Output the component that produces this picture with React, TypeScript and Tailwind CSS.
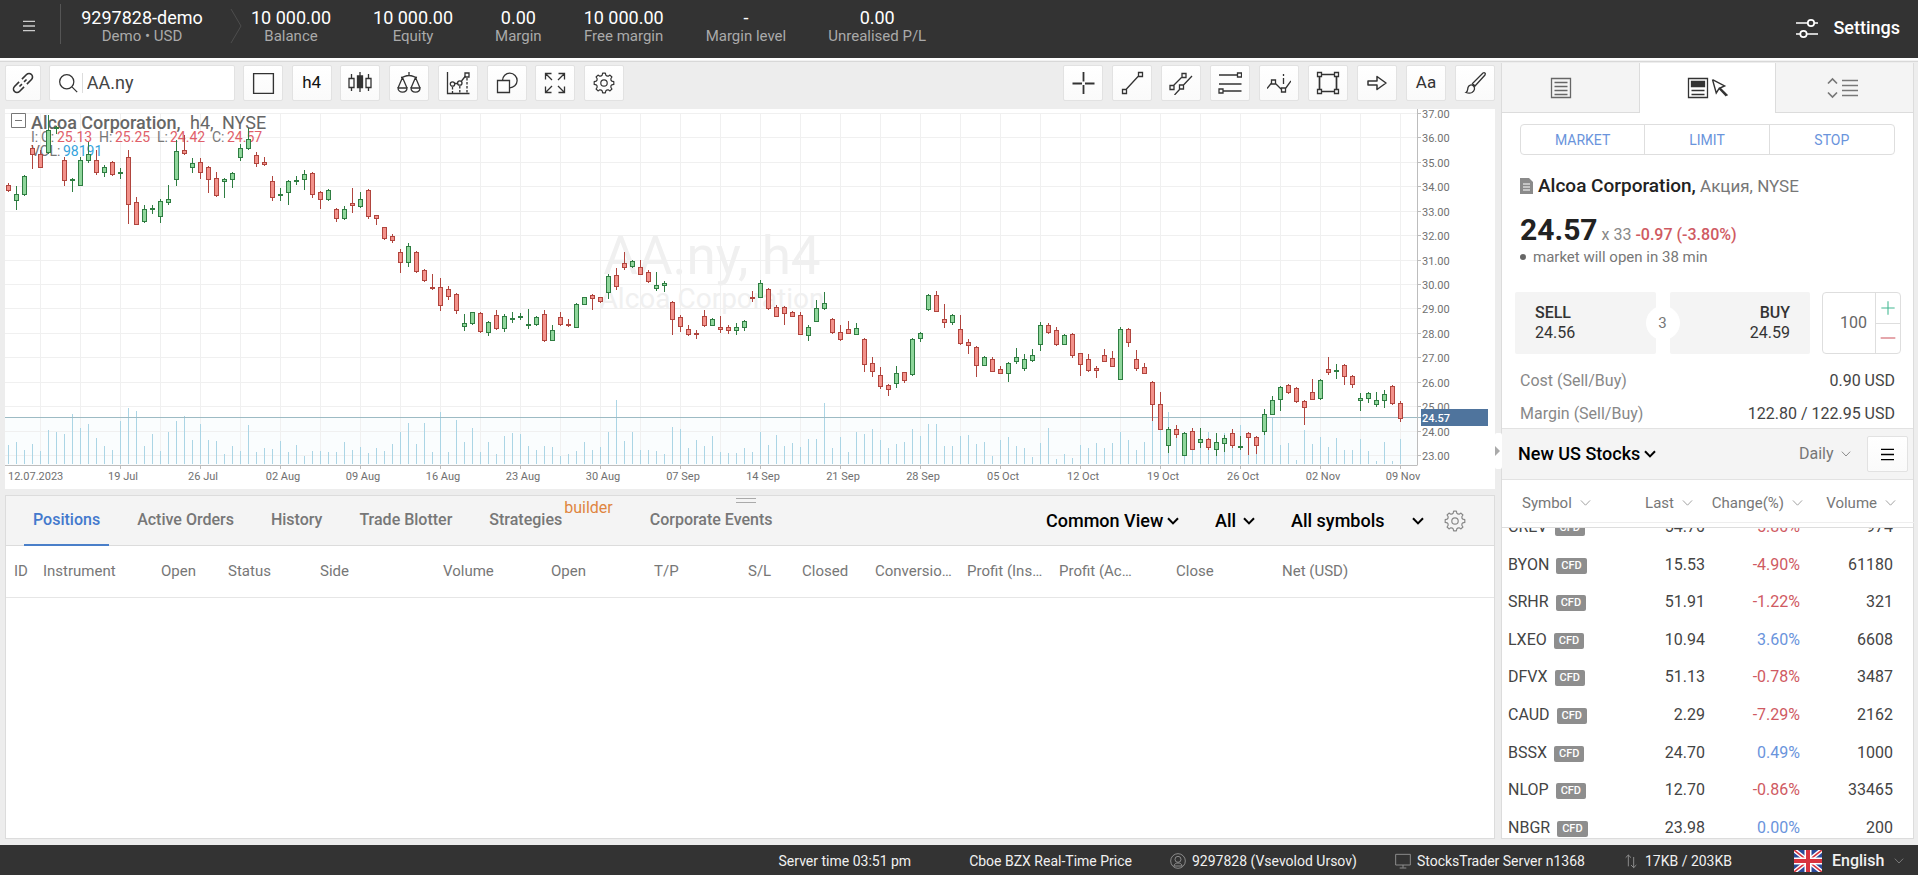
import React, { useState } from "react";

type Candle = ["u" | "d", number, number, number, number];

// direction, high, body top, body bottom, low (chart units)
const CANDLES: Candle[] = [
  ["d", 183, 185, 190, 191], ["u", 186, 194, 200, 209], ["u", 175, 176, 194, 195], ["d", 145, 148, 154, 168],
  ["d", 150, 154, 167, 167], ["u", 115, 130, 152, 153], ["u", 126, 127, 128, 133], ["d", 157, 160, 180, 185],
  ["u", 178, 179, 180, 191], ["u", 157, 160, 185, 185], ["u", 142, 154, 160, 162], ["d", 150, 160, 172, 174],
  ["u", 165, 167, 172, 176], ["d", 161, 162, 174, 175], ["u", 168, 172, 173, 178], ["d", 150, 157, 204, 223],
  ["d", 197, 202, 224, 224], ["u", 205, 209, 221, 222], ["u", 205, 208, 209, 213], ["u", 199, 201, 216, 222],
  ["u", 185, 199, 202, 204], ["u", 140, 151, 179, 185], ["d", 135, 150, 153, 154], ["u", 158, 163, 167, 172],
  ["d", 158, 162, 172, 178], ["d", 166, 167, 179, 192], ["d", 172, 178, 195, 196], ["u", 178, 179, 181, 197],
  ["u", 172, 173, 179, 187], ["u", 144, 148, 157, 160], ["u", 128, 139, 148, 149], ["d", 152, 155, 163, 166],
  ["d", 157, 162, 164, 165], ["d", 176, 181, 197, 200], ["u", 188, 194, 195, 200], ["u", 180, 181, 192, 204],
  ["u", 176, 180, 181, 184], ["u", 170, 174, 179, 189], ["d", 172, 173, 194, 197], ["d", 191, 192, 199, 208],
  ["u", 189, 190, 199, 200], ["d", 208, 209, 218, 221], ["u", 206, 209, 218, 219], ["d", 188, 203, 205, 212],
  ["u", 192, 199, 206, 207], ["d", 189, 190, 216, 218], ["d", 215, 215, 218, 224], ["d", 227, 227, 238, 239],
  ["d", 234, 236, 240, 242], ["d", 249, 252, 262, 272], ["u", 243, 246, 262, 266], ["d", 251, 252, 271, 272],
  ["d", 269, 270, 280, 281], ["d", 274, 287, 288, 289], ["d", 278, 287, 305, 310], ["d", 286, 289, 296, 299],
  ["d", 293, 294, 310, 313], ["u", 314, 323, 326, 330], ["u", 312, 312, 323, 324], ["d", 312, 313, 331, 332],
  ["u", 321, 322, 332, 335], ["d", 310, 315, 328, 329], ["u", 314, 316, 328, 331], ["u", 312, 318, 319, 322],
  ["u", 313, 316, 317, 319], ["u", 309, 324, 325, 328], ["u", 316, 317, 324, 325], ["d", 310, 314, 340, 341],
  ["u", 325, 330, 340, 340], ["d", 312, 317, 324, 325], ["d", 319, 324, 325, 326], ["u", 303, 304, 327, 327],
  ["u", 297, 297, 304, 304], ["d", 294, 295, 298, 309], ["d", 297, 297, 301, 302], ["u", 274, 276, 292, 298],
  ["d", 268, 275, 286, 289], ["d", 252, 263, 267, 269], ["u", 260, 261, 266, 267], ["d", 260, 267, 274, 274],
  ["d", 270, 272, 281, 282], ["u", 272, 285, 288, 290], ["u", 281, 283, 285, 291], ["d", 301, 302, 319, 334],
  ["d", 315, 317, 326, 331], ["d", 325, 329, 334, 335], ["d", 330, 333, 334, 338], ["d", 310, 316, 325, 326],
  ["u", 318, 319, 325, 325], ["d", 316, 327, 329, 332], ["d", 325, 327, 330, 333], ["u", 323, 327, 330, 334],
  ["u", 320, 321, 327, 330], ["d", 291, 297, 298, 301], ["u", 280, 283, 297, 297], ["d", 288, 289, 308, 309],
  ["d", 305, 307, 316, 316], ["d", 306, 307, 313, 324], ["d", 311, 312, 316, 316], ["d", 312, 315, 334, 334],
  ["u", 325, 327, 335, 340], ["u", 300, 308, 321, 321], ["u", 292, 303, 308, 309], ["d", 318, 319, 332, 333],
  ["d", 325, 332, 339, 340], ["d", 321, 329, 333, 333], ["u", 323, 328, 334, 334], ["d", 338, 339, 364, 371],
  ["d", 357, 363, 371, 376], ["d", 367, 375, 386, 388], ["d", 384, 385, 389, 395], ["u", 366, 373, 383, 387],
  ["d", 372, 372, 380, 382], ["u", 338, 339, 374, 375], ["u", 332, 333, 338, 341], ["u", 294, 295, 309, 310],
  ["d", 291, 295, 311, 311], ["d", 304, 319, 322, 327], ["u", 314, 315, 322, 324], ["d", 315, 329, 343, 344],
  ["d", 339, 342, 345, 353], ["d", 346, 347, 365, 376], ["u", 356, 357, 365, 365], ["d", 357, 359, 371, 371],
  ["d", 366, 369, 373, 373], ["u", 362, 363, 373, 381], ["u", 348, 357, 361, 363], ["u", 354, 359, 368, 370],
  ["u", 349, 355, 360, 361], ["u", 322, 325, 344, 350], ["d", 323, 325, 332, 333], ["d", 327, 330, 344, 345],
  ["u", 334, 335, 344, 344], ["d", 333, 334, 355, 357], ["d", 353, 353, 364, 375], ["d", 354, 359, 370, 371],
  ["d", 366, 368, 370, 377], ["d", 349, 355, 361, 361], ["d", 351, 358, 366, 366], ["u", 327, 329, 379, 379],
  ["d", 328, 329, 342, 346], ["d", 350, 359, 368, 370], ["d", 363, 367, 373, 373], ["d", 381, 382, 404, 420],
  ["d", 392, 404, 429, 429], ["u", 427, 429, 445, 452], ["d", 425, 429, 434, 437], ["u", 432, 433, 455, 455],
  ["d", 428, 431, 449, 449], ["u", 428, 439, 442, 447], ["d", 438, 439, 447, 449], ["u", 433, 442, 449, 455],
  ["u", 435, 438, 443, 451], ["d", 429, 433, 445, 447], ["u", 436, 446, 447, 449], ["d", 432, 433, 437, 454],
  ["d", 436, 437, 445, 453], ["u", 409, 414, 431, 434], ["u", 396, 400, 414, 414], ["u", 386, 387, 399, 410],
  ["d", 384, 385, 392, 393], ["d", 387, 388, 401, 402], ["d", 400, 401, 407, 424], ["d", 379, 392, 399, 399],
  ["u", 379, 380, 398, 399], ["d", 357, 369, 372, 374], ["u", 364, 370, 371, 378], ["d", 364, 365, 376, 384],
  ["d", 375, 376, 384, 387], ["u", 393, 398, 400, 410], ["u", 392, 393, 398, 402], ["u", 392, 400, 404, 406],
  ["u", 390, 394, 400, 407], ["d", 385, 386, 403, 404], ["d", 401, 403, 418, 421],
];

const VOLUMES = [
  19, 22, 14, 20, 13, 34, 32, 30, 50, 36, 40, 26, 18, 14, 43, 56, 53, 18, 30, 13, 32, 43, 48, 24, 40, 24, 23, 10, 18, 13,
  39, 12, 16, 15, 23, 12, 19, 8, 13, 13, 12, 12, 22, 14, 17, 11, 16, 13, 20, 32, 41, 20, 41, 12, 52, 12, 44, 22, 36, 12,
  22, 10, 28, 31, 30, 18, 14, 18, 17, 8, 10, 13, 22, 14, 17, 32, 64, 23, 32, 14, 14, 13, 10, 37, 35, 16, 24, 18, 28, 12,
  11, 11, 16, 12, 32, 19, 29, 18, 21, 17, 25, 25, 61, 16, 27, 12, 32, 30, 35, 24, 16, 20, 22, 35, 28, 40, 40, 18, 18, 28,
  29, 20, 22, 8, 24, 27, 18, 16, 7, 21, 36, 5, 10, 6, 19, 16, 21, 16, 21, 32, 24, 14, 22, 46, 34, 52, 27, 20, 15, 16,
  32, 15, 31, 25, 39, 12, 11, 30, 46, 19, 21, 4, 34, 20, 27, 17, 26, 14, 14, 25, 13, 3, 22, 3, 25,
];

const PRICES = Array.from({ length: 15 }, (_, i) => 37 - i);
const DATES = [
  "19 Jul", "26 Jul", "02 Aug", "09 Aug", "16 Aug", "23 Aug", "30 Aug", "07 Sep", "14 Sep",
  "21 Sep", "28 Sep", "05 Oct", "12 Oct", "19 Oct", "26 Oct", "02 Nov", "09 Nov",
];

const candleX = (i: number) => 8.5 + i * 8;
const priceY = (p: number) => Math.round(113 + (37 - p) * 24.43) + 0.5;

const STATS = [
  ["10 000.00", "Balance"],
  ["10 000.00", "Equity"],
  ["0.00", "Margin"],
  ["10 000.00", "Free margin"],
  ["-", "Margin level"],
  ["0.00", "Unrealised P/L"],
];

const TABS = ["Positions", "Active Orders", "History", "Trade Blotter", "Strategies", "Corporate Events"];

const COLUMNS: [string, string][] = [
  ["ID", "w-[37px] pl-2"],
  ["Instrument", "w-[118px]"],
  ["Open", "w-[67px]"],
  ["Status", "w-[92px]"],
  ["Side", "w-[123px]"],
  ["Volume", "w-[108px]"],
  ["Open", "w-[103px]"],
  ["T/P", "w-[94px]"],
  ["S/L", "w-[54px]"],
  ["Closed", "w-[73px]"],
  ["Conversio…", "w-[92px]"],
  ["Profit (Ins…", "w-[92px]"],
  ["Profit (Ac…", "w-[117px]"],
  ["Close", "w-[106px]"],
  ["Net (USD)", "w-[212px]"],
];

interface Quote {
  symbol: string;
  last: string;
  change: string;
  volume: string;
}

const QUOTES: Quote[] = [
  { symbol: "CREV", last: "54.70", change: "-5.80%", volume: "974" },
  { symbol: "BYON", last: "15.53", change: "-4.90%", volume: "61180" },
  { symbol: "SRHR", last: "51.91", change: "-1.22%", volume: "321" },
  { symbol: "LXEO", last: "10.94", change: "3.60%", volume: "6608" },
  { symbol: "DFVX", last: "51.13", change: "-0.78%", volume: "3487" },
  { symbol: "CAUD", last: "2.29", change: "-7.29%", volume: "2162" },
  { symbol: "BSSX", last: "24.70", change: "0.49%", volume: "1000" },
  { symbol: "NLOP", last: "12.70", change: "-0.86%", volume: "33465" },
  { symbol: "NBGR", last: "23.98", change: "0.00%", volume: "200" },
];

const gearPath = () => {
  const pt = (r: number, deg: number) => {
    const a = (deg * Math.PI) / 180;
    return `${(12 + r * Math.cos(a)).toFixed(2)} ${(12 + r * Math.sin(a)).toFixed(2)}`;
  };
  let d = "";
  for (let k = 0; k < 8; k++) {
    const a = k * 45;
    d += `${k === 0 ? "M" : "L"}${pt(8.8, a - 13)}L${pt(10.8, a - 8)}L${pt(10.8, a + 8)}L${pt(8.8, a + 13)}Q${pt(7.8, a + 22.5)} ${pt(8.8, a + 32)}`;
  }
  return d + "Z";
};

const Icon: React.FC<{ children: React.ReactNode; className?: string }> = ({ children, className = "size-6" }) => (
  <svg viewBox="0 0 24 24" className={className} fill="none" stroke="currentColor" strokeWidth="1.3" aria-hidden="true">
    {children}
  </svg>
);

const Gear: React.FC<{ className?: string }> = ({ className = "size-[22px]" }) => (
  <Icon className={className}>
    <path d={gearPath()} strokeLinejoin="round" />
    <circle cx="12" cy="12" r="3.5" />
  </Icon>
);

const Burger: React.FC<{ className: string }> = ({ className }) => (
  <svg viewBox="0 0 14 14" className={className} fill="none" stroke="currentColor" strokeWidth="1.5" aria-hidden="true">
    <path d="M0 1.5h14M0 7h14M0 12.5h14" />
  </svg>
);

const Chevron: React.FC<{ className: string; weight?: string }> = ({ className, weight = "1.5" }) => (
  <svg viewBox="0 0 12 8" className={className} fill="none" stroke="currentColor" strokeWidth={weight} aria-hidden="true">
    <path d="M1 1.2 6 6.4l5-5.2" />
  </svg>
);

const CHART_TOOLS: [string, React.ReactNode][] = [
  ["Layout", <Icon className="size-[25px]"><path d="M2.5 2.5h19v19h-19z" /></Icon>],
  ["Timeframe", <span className="text-[17px] text-[#111]">h4</span>],
  ["Chart type", (
    <Icon>
      <path d="M3.5 3v4M3.5 16.5V20M20.5 3v4M20.5 16.5V20M12 1v4M12 17v4" />
      <path d="M1 7.5h5v9H1zM18 7.5h5v9h-5z" />
      <path d="M9.5 5h5v11.5h-5z" fill="currentColor" />
    </Icon>
  )],
  ["Compare", (
    <Icon>
      <path d="M12 1v4M4 6.5C8 6 8 4.5 12 4.5s4 1.5 8 2M5.5 6.5 1 17M5.5 6.5 10 17M18.5 6.5 14 17M18.5 6.5 23 17" />
      <path d="M1 17h9c0 5.5-9 5.5-9 0zM14 17h9c0 5.5-9 5.5-9 0z" />
    </Icon>
  )],
  ["Indicators", (
    <Icon>
      <path d="M1.5 1v21.5h22M9 12.5h3M15.5 10l4-5" />
      <path d="M6.5 16v6M13.8 15v7M21 7v15" strokeDasharray="2.5 1.5" />
      <circle cx="6.5" cy="13" r="2.2" /><circle cx="13.8" cy="12" r="2.2" /><path d="M19 2h4v4h-4z" />
    </Icon>
  )],
  ["Shapes", (
    <Icon>
      <path d="M2.5 9.5h12v12h-12z" />
      <path d="M7.5 9.5a7.3 7.3 0 1 1 7 7.3" />
    </Icon>
  )],
  ["Full screen", (
    <Icon>
      <path d="M2.5 8.5v-6h6M15.5 2.5h6v6M21.5 15.5v6h-6M8.5 21.5h-6v-6M2.5 2.5 9 9M21.5 2.5 15 9M21.5 21.5 15 15M2.5 21.5 9 15" />
    </Icon>
  )],
  ["Chart settings", <Gear />],
];

const DRAW_TOOLS: [string, React.ReactNode][] = [
  ["Crosshair", <Icon><path d="M12.5 1v9.5M12.5 14v9M1.5 12.5H11M14 12.5h9.5" strokeWidth="1.8" /></Icon>],
  ["Trend line", <Icon><path d="M6 18.5 18.5 5M2.5 18.5h4v4h-4zM18.5 1.5h4v4h-4z" /></Icon>],
  ["Channel", (
    <Icon>
      <path d="M4.5 14.5l8-8M1 14.5h4v4H1zM13 2.5h4v4h-4zM5.5 24l5-5.5M14.5 14 23 5M10.5 14h4v4h-4z" />
    </Icon>
  )],
  ["Fibonacci", (
    <Icon>
      <path d="M1 4h18M1 13h22.5M5 20h18.5" strokeWidth="1.7" /><path d="M19.5 2h4v4h-4zM1 18h4v4H1z" />
    </Icon>
  )],
  ["Waves", (
    <Icon>
      <path d="M0 17.5 4.5 12M8.5 12.5l6 6M18.5 17.5 24 10M4.5 9h4v4h-4zM14.5 17h4v4h-4z" />
      <path d="M16.5 3v2M16.5 7v6" />
    </Icon>
  )],
  ["Rectangle", (
    <Icon>
      <path d="M5 3.5h14M5 20.5h14M3.5 5v14M20.5 5v14" strokeWidth="1.7" />
      <path d="M1.5 1.5h4v4h-4zM18.5 1.5h4v4h-4zM1.5 18.5h4v4h-4zM18.5 18.5h4v4h-4z" />
    </Icon>
  )],
  ["Arrow", <Icon><path d="M3 10h9V5.5l9 6.5-9 6.5V14H3z" strokeLinejoin="round" strokeWidth="1.5" /></Icon>],
  ["Text", <span className="text-[17px] text-[#333]">Aa</span>],
  ["Brush", (
    <Icon>
      <path d="M9.5 12.5 20 2c1.5-1 3 .5 2 2L12 15zM3 21.5c2-1 1.5-3 2-5 .7-2.5 3.5-3.5 5.5-1.5s1 5-1.5 6.5c-2 1-4 .8-6 0z" />
    </Icon>
  )],
];

const ToolButton: React.FC<{ label: string; className?: string; children: React.ReactNode }> = ({ label, className = "w-10", children }) => (
  <button
    type="button"
    aria-label={label}
    className={`${className} h-9 shrink-0 flex items-center justify-center rounded-xs border border-[#e2e2e2] bg-linear-to-b from-white to-[#fafafa] text-[#333]`}
  >
    {children}
  </button>
);

interface DropdownProps {
  label: string;
  value: string;
  className: string;
  arrow?: string;
  weight?: string;
}

const Dropdown: React.FC<DropdownProps> = ({ label, value, className, arrow = "w-3 h-2", weight }) => (
  <span className="relative inline-flex items-center">
    <select aria-label={label} className={`appearance-none bg-transparent outline-none ${className}`}>
      <option>{value}</option>
    </select>
    <span className="absolute right-0 pointer-events-none">
      <Chevron className={arrow} weight={weight} />
    </span>
  </span>
);

const Header: React.FC = () => (
  <header className="h-[58px] shrink-0 bg-[#333] flex items-start text-white">
    <button type="button" aria-label="Menu" className="w-[60px] h-[52px] pl-[23px] text-[#ccc]">
      <Burger className="size-3" />
    </button>
    <div className="w-px h-10 mt-1 bg-[#555]" />
    <div className="w-[162px] pt-2 text-center">
      <div className="text-lg leading-5">9297828-demo</div>
      <div className="text-[15px] leading-4 text-[#aaa]">Demo • USD</div>
    </div>
    <svg viewBox="0 0 12 36" className="w-3 h-9 mt-2 ml-[7px] mr-[9px]" fill="none" stroke="#4d4d4d" aria-hidden="true">
      <path d="M1 1l10 17L1 35" />
    </svg>
    <dl className="flex gap-[42px] pt-2 text-center">
      {STATS.map(([value, label]) => (
        <div key={label} className="flex flex-col-reverse">
          <dt className="text-[15px] leading-4 text-[#aaa]">{label}</dt>
          <dd className="text-lg leading-5">{value}</dd>
        </div>
      ))}
    </dl>
    <button type="button" className="ml-auto mr-[18px] h-14 flex items-center gap-[14px] text-lg font-medium">
      <svg viewBox="0 0 24 24" className="size-6" fill="none" stroke="currentColor" strokeWidth="1.7" aria-hidden="true">
        <path d="M1 7h11.5M19.5 7H23M1 18h4M12 18h11" />
        <circle cx="16" cy="7" r="3.2" />
        <circle cx="8.5" cy="18" r="3.2" />
      </svg>
      Settings
    </button>
  </header>
);

const Toolbar: React.FC = () => (
  <div className="flex items-center">
    <ToolButton label="Link" className="w-9">
      <Icon>
        <g transform="rotate(-45 12 12)" strokeWidth="1.6">
          <path d="M10 8.5H3.5a3.5 3.5 0 0 0 0 7H10M14 8.5h6.5a3.5 3.5 0 0 1 0 7H14M7 12h3.5M13.5 12H17" />
        </g>
      </Icon>
    </ToolButton>
    <label className="ml-2 w-[186px] h-9 flex items-center rounded-xs border border-[#e2e2e2] bg-white px-2 text-[#333]">
      <Icon className="size-5 shrink-0">
        <circle cx="10.5" cy="10.5" r="8.5" strokeWidth="1.5" />
        <path d="M17 17l6 6" strokeWidth="1.5" />
      </Icon>
      <span className="w-px h-5 mx-1 bg-[#ddd]" />
      <input aria-label="Instrument" defaultValue="AA.ny" className="w-full outline-none text-lg leading-6 text-[#444]" />
    </label>
    <div className="ml-2 w-[381px] flex justify-between">
      {CHART_TOOLS.map(([label, icon]) => (
        <ToolButton key={label} label={label}>{icon}</ToolButton>
      ))}
    </div>
    <div className="ml-auto flex gap-[9px]">
      {DRAW_TOOLS.map(([label, icon]) => (
        <ToolButton key={label} label={label}>{icon}</ToolButton>
      ))}
    </div>
  </div>
);

const Chart: React.FC = () => (
  <svg viewBox="5 109 1490 380" preserveAspectRatio="xMinYMin meet" className="block w-full bg-white font-[Roboto,sans-serif]" role="img" aria-label="AA.ny price chart">
    <rect x="5" y="418" width="1412" height="47" fill="#fafdfe" />
    <g stroke="#f0f0f0">
      {Array.from({ length: 35 }).map((_, i) => (
        <path key={i} d={`M${40.5 + i * 40} 113V465`} />
      ))}
      {PRICES.map((p) => (
        <path key={p} d={`M5 ${priceY(p)}H1417`} />
      ))}
    </g>
    <g fill="#f0f0f0" textAnchor="middle">
      <text x="712" y="274" fontSize="53">AA.ny, h4</text>
      <text x="712" y="308" fontSize="28">Alcoa Corporation</text>
    </g>
    <g stroke="#abd5e5">
      {VOLUMES.map((v, i) => (
        <path key={i} d={`M${candleX(i)} ${464 - v}V464`} />
      ))}
    </g>
    <path d="M5 417.5H1421" stroke="#9dbbc4" />
    <path d="M5 465.5H1417.5M1417.5 109V465" stroke="#bdbdbd" fill="none" />

    <g fontSize="18" fill="#666">
      <text x="31" y="129" fontWeight="500">Alcoa Corporation,</text>
      <text x="190" y="129">h4,</text>
      <text x="222" y="129">NYSE</text>
    </g>
    <g fontSize="14" fill="#777">
      <text x="31" y="142">I:</text><text x="41" y="142">O:</text><text x="99" y="142">H:</text>
      <text x="157" y="142">L:</text><text x="212" y="142">C:</text><text x="31" y="156">VOL:</text>
      <g fill="#e0606a">
        <text x="57" y="142">25.13</text><text x="115" y="142">25.25</text>
        <text x="170" y="142">24.42</text><text x="227" y="142">24.57</text>
      </g>
      <text x="63" y="156" fill="#35a3dc">98191</text>
    </g>
    <path d="M11.5 113.5h14v14h-14zM15 120.5h7" fill="none" stroke="#777" />

    {CANDLES.map(([dir, high, top, bottom, low], i) => {
      const x = candleX(i);
      const stroke = dir === "u" ? "#2f7d42" : "#b0453e";
      return (
        <g key={i} stroke={stroke} fill={dir === "u" ? "#8fd69b" : "#f2918a"}>
          <path d={`M${x} ${high}V${low + 1}`} />
          <rect x={x - 2} y={top + 0.5} width="4" height={Math.max(bottom - top, 1)} />
        </g>
      );
    })}

    <g fontSize="11" fill="#707070">
      {PRICES.map((p) => (
        <g key={p}>
          <path d={`M1417 ${priceY(p)}h4`} stroke="#bdbdbd" />
          <text x="1422" y={priceY(p) + 4.5}>{p.toFixed(2)}</text>
        </g>
      ))}
      <text x="8" y="480">12.07.2023</text>
      {DATES.map((d, i) => (
        <g key={d}>
          <path d={`M${120.5 + i * 80} 465v4`} stroke="#bdbdbd" />
          <text x={123 + i * 80} y="480" textAnchor="middle">{d}</text>
        </g>
      ))}
    </g>
    <rect x="1421" y="409" width="67" height="17" fill="#4f749d" />
    <text x="1422" y="422" fontSize="11" fontWeight="500" fill="#fff">24.57</text>
  </svg>
);

const Positions: React.FC = () => {
  const [active, setActive] = useState("Positions");

  return (
    <section className="flex-1 min-h-0 bg-white border border-[#dcdcdc]">
      <div className="relative h-[50px] pl-[18px] flex items-stretch bg-[#f4f4f4] border-b border-[#dcdcdc]">
        <div className="absolute top-[2px] left-1/2 -ml-[14px] w-5 h-[5px] border-y border-[#aaa]" />
        <div className="flex gap-[19px]">
          {TABS.map((tab) => (
            <button
              key={tab}
              type="button"
              onClick={() => setActive(tab)}
              className={`flex items-center px-[9px] -mb-px border-b-2 text-base font-medium ${active === tab ? "border-[#4a7fc9] text-[#4379cd]" : "border-transparent text-[#777]"}`}
            >
              {tab}
              {tab === "Strategies" && <span className="pb-6 pl-[2px] font-normal text-[#df8540]">builder</span>}
            </button>
          ))}
        </div>
        <div className="ml-auto mr-7 flex items-center text-lg font-medium text-black">
          <Dropdown label="View" value="Common View" className="w-[133px]" weight="2" />
          <span className="w-9" />
          <Dropdown label="Side" value="All" className="w-10" weight="2" />
          <span className="w-9" />
          <Dropdown label="Symbols" value="All symbols" className="w-[133px]" weight="2" />
          <button type="button" aria-label="Table settings" className="ml-5 text-[#888]">
            <Gear />
          </button>
        </div>
      </div>
      <table className="w-full table-fixed text-[15px]">
        <thead>
          <tr className="h-[51px] border-b border-[#e6e6e6] text-left text-[#777]">
            {COLUMNS.map(([name, cls], i) => (
              <th key={i} scope="col" className={`font-normal whitespace-nowrap ${cls}`}>{name}</th>
            ))}
          </tr>
        </thead>
        <tbody />
      </table>
    </section>
  );
};

const OrderPanel: React.FC = () => (
  <section className="px-[18px] pt-[11px] h-[315px] shrink-0 overflow-hidden">
    <div className="grid grid-cols-3 h-[31px] rounded-sm border border-[#dedede] divide-x divide-[#dedede] text-sm text-[#6a94dc]">
      <button type="button">MARKET</button>
      <button type="button">LIMIT</button>
      <button type="button">STOP</button>
    </div>
    <h2 className="mt-[19px] flex items-center gap-[5px] text-[17px] leading-6 text-[#777] whitespace-nowrap">
      <svg viewBox="0 0 13 16" className="w-[13px] h-4" aria-hidden="true">
        <path d="M0 0h9l4 4v12H0z" fill="#8a8a8a" />
        <path d="M3 6h7M3 9h7M3 12h7" stroke="#fff" />
      </svg>
      <span><b className="text-[19px] leading-6 font-medium text-[#222]">Alcoa Corporation,</b> Акция, NYSE</span>
    </h2>
    <p className="mt-[18px] leading-7 text-[#888]">
      <b className="text-3xl leading-7 font-bold text-[#222]">24.57</b>
      <span className="text-base"> x 33 </span>
      <span className="text-base font-medium text-[#cf5a62]">-0.97 (-3.80%)</span>
    </p>
    <p className="flex items-center gap-[7px] text-[15px] leading-4 text-[#777]">
      <span className="size-[6px] rounded-full bg-[#666]" />
      market will open in 38 min
    </p>
    <div className="mt-[27px] -ml-[5px] -mr-[6px] flex h-[62px]">
      <div className="relative flex flex-1 gap-[14px]">
        <button type="button" className="flex-1 rounded-xs bg-[#f4f4f4] px-5 text-left text-base leading-5 text-[#333]">
          <span className="block font-medium">SELL</span>24.56
        </button>
        <button type="button" className="flex-1 rounded-xs bg-[#f4f4f4] px-5 text-right text-base leading-5 text-[#333]">
          <span className="block font-medium">BUY</span>24.59
        </button>
        <span className="absolute inset-0 m-auto size-[34px] rounded-full bg-white flex items-center justify-center text-[15px] text-[#777] pointer-events-none">
          3
        </span>
      </div>
      <div className="ml-3 w-[79px] flex rounded-sm border border-[#dedede]">
        <input aria-label="Quantity" defaultValue="100" className="w-[52px] pr-2 text-right text-base text-[#666] outline-none" />
        <div className="flex-1 flex flex-col border-l border-[#dedede] divide-y divide-[#dedede]">
          <button type="button" aria-label="Increase" className="flex-1 flex items-center justify-center text-[#43b892]">
            <Icon className="size-4"><path d="M12 2v20M2 12h20" strokeWidth="1.6" /></Icon>
          </button>
          <button type="button" aria-label="Decrease" className="flex-1 flex items-center justify-center text-[#cf5a62]">
            <Icon className="size-4"><path d="M1 12h22" strokeWidth="1.6" /></Icon>
          </button>
        </div>
      </div>
    </div>
    <dl className="mt-[10px] text-base leading-[33px] text-[#444]">
      <div className="flex justify-between">
        <dt className="text-[#888]">Cost (Sell/Buy)</dt>
        <dd>0.90 USD</dd>
      </div>
      <div className="flex justify-between">
        <dt className="text-[#888]">Margin (Sell/Buy)</dt>
        <dd>122.80 / 122.95 USD</dd>
      </div>
    </dl>
  </section>
);

const QUOTE_HEADS: [string, string][] = [
  ["Symbol", "w-[70px]"],
  ["Last", "w-[101px]"],
  ["Change(%)", "w-[110px]"],
  ["Volume", "w-[111px] pr-[18px]"],
];

const Watchlist: React.FC = () => (
  <section className="flex-1 min-h-0 flex flex-col">
    <div className="h-[52px] shrink-0 flex items-center pl-4 pr-[5px] bg-[#f4f4f4] border-y border-[#e2e2e2]">
      <span className="text-lg font-medium text-black">
        <Dropdown label="Watchlist" value="New US Stocks" className="w-[138px]" weight="2" />
      </span>
      <span className="ml-auto mr-4 text-base text-[#777]">
        <Dropdown label="Period" value="Daily" className="w-[52px]" arrow="w-[10px] h-2" weight="1" />
      </span>
      <ToolButton label="List menu" className="w-[41px]"><Burger className="size-[13px] text-black" /></ToolButton>
    </div>
    <div className="pl-5 pb-1 border-b border-[#ddd]">
      <table className="w-full table-fixed text-[15px] text-[#777]">
        <thead>
          <tr className="h-[42px] border-b border-[#eee]">
            {QUOTE_HEADS.map(([name, cls]) => (
              <th key={name} scope="col" className={`pt-1 font-normal ${cls}`}>
                <button type="button" className={`flex w-full items-center gap-2 whitespace-nowrap ${name === "Symbol" ? "" : "justify-end"}`}>
                  {name}
                  <Chevron className="w-[11px] h-2 text-[#999]" weight="1" />
                </button>
              </th>
            ))}
          </tr>
        </thead>
      </table>
    </div>
    <div className="flex-1 min-h-0 overflow-hidden">
      <table className="w-full table-fixed h-[338px] -mt-[19px] text-base text-[#444]">
        <tbody>
          {QUOTES.map((q) => (
            <tr key={q.symbol}>
              <td className="w-[100px] pl-[6px] whitespace-nowrap">
                {q.symbol}
                <span className="ml-[7px] inline-block rounded-xs bg-[#8e8e8e] px-[5px] text-[11px] leading-4 font-medium text-white align-[1px]">CFD</span>
              </td>
              <td className="w-[103px] text-right">{q.last}</td>
              <td className={`w-[95px] text-right ${q.change.startsWith("-") ? "text-[#cf5a62]" : "text-[#6a94dc]"}`}>{q.change}</td>
              <td className="w-[114px] pr-[21px] text-right">{q.volume}</td>
            </tr>
          ))}
        </tbody>
      </table>
    </div>
  </section>
);

const SidePanel: React.FC = () => (
  <aside className="relative w-[413px] shrink-0 flex flex-col bg-white border-x border-b border-[#dcdcdc]">
    <button type="button" aria-label="Collapse panel" className="absolute top-[370px] -left-[7px] w-[7px] h-9 rounded-xs bg-white flex items-center">
      <svg viewBox="0 0 5 10" className="w-[5px] h-[10px]" aria-hidden="true"><path d="M0 0l5 5-5 5z" fill="#aaa" /></svg>
    </button>
    <div className="grid grid-cols-3 h-[50px] shrink-0">
      <button type="button" aria-label="Instrument info" className="flex items-center justify-center pr-5 bg-[#f4f4f4] border-b border-[#dcdcdc] text-[#666]">
        <Icon className="size-6"><path d="M2.5 2.5h19v19h-19zM5.5 6.5h13M5.5 10.5h13M5.5 14.5h13M5.5 18.5h13" /></Icon>
      </button>
      <button type="button" aria-label="Order" className="flex items-center justify-center border-x border-[#dcdcdc] text-[#333]">
        <Icon className="size-6"><path d="M2.5 2.5h19v19h-19z" /><path d="M5.5 5.5h13v5h-13z" fill="currentColor" /><path d="M5.5 14.5h13M5.5 18.5h13" /></Icon>
        <Icon className="size-5"><path d="M3 2l4.5 16 3.5-5.500 8.500 9M3 2l14.500 7.500-5.500 2.500 9 9" strokeWidth="1.7" /></Icon>
      </button>
      <button type="button" aria-label="Market depth" className="flex items-center justify-center pr-1 bg-[#f4f4f4] border-b border-[#dcdcdc] text-[#777]">
        <svg viewBox="0 0 32 24" className="w-8 h-6" fill="none" stroke="currentColor" strokeWidth="1.7" aria-hidden="true">
          <path d="M1 7.5 5.5 3 10 7.5M1 16.5 5.5 21l4.5-4.5M15 4.5h16M15 9.5h16M15 14.5h16M15 19.5h16" />
        </svg>
      </button>
    </div>
    <OrderPanel />
    <Watchlist />
  </aside>
);

const UkFlag: React.FC = () => (
  <svg viewBox="0 0 28 22" className="w-7 h-[22px]" aria-hidden="true">
    <rect width="28" height="22" fill="#2b4a9b" />
    <path d="M0 0l28 22M28 0 0 22" stroke="#fff" strokeWidth="4.5" />
    <path d="M0 0l28 22M28 0 0 22" stroke="#d8333f" strokeWidth="1.6" />
    <path d="M14 0v22M0 11h28" stroke="#fff" strokeWidth="7" />
    <path d="M14 0v22M0 11h28" stroke="#d8333f" strokeWidth="4" />
  </svg>
);

const Footer: React.FC = () => (
  <footer className="h-[30px] shrink-0 bg-[#333] flex items-center justify-end pt-[2px] pr-[14px] text-sm text-[#f0f0f0] whitespace-nowrap">
    <span>Server time 03:51 pm</span>
    <span className="ml-[58px]">Cboe BZX Real-Time Price</span>
    <span className="ml-[38px] flex items-center gap-[6px]">
      <Icon className="size-4 text-[#999]">
        <circle cx="12" cy="12" r="11" /><circle cx="12" cy="9.5" r="4.5" /><path d="M6 19.5c0-6 12-6 12 0z" />
      </Icon>
      9297828 (Vsevolod Ursov)
    </span>
    <span className="ml-[38px] flex items-center gap-[6px]">
      <Icon className="size-4 text-[#999]"><path d="M1 2h22v16H1zM12 18v4M7 22.5h10" /></Icon>
      StocksTrader Server n1368
    </span>
    <span className="ml-[38px] flex items-center gap-[6px]">
      <Icon className="size-4 text-[#999]"><path d="M8 20V3M4 7l4-4 4 4M16 6v16M12 18l4 4 4-4" /></Icon>
      17KB / 203KB
    </span>
    <span className="ml-[62px] flex items-center gap-[10px] text-base font-medium">
      <UkFlag />
      <Dropdown label="Language" value="English" className="w-[72px]" arrow="w-[10px] h-2 text-[#888]" weight="1" />
    </span>
  </footer>
);

const App: React.FC = () => (
  <div className="h-screen flex flex-col bg-[#ededed] font-[Roboto,sans-serif]">
    <Header />
    <div className="h-[5px] shrink-0 border-t-2 border-white">
      <div className="h-[2px] border-b border-[#d8d8d8] bg-[#f2f2f2]" />
    </div>
    <main className="flex-1 min-h-0 flex gap-[6px] pl-[5px] pr-1 pb-[6px]">
      <div className="flex-1 min-w-0 flex flex-col pt-[2px]">
        <Toolbar />
        <div className="mt-2 mb-[6px]">
          <Chart />
        </div>
        <Positions />
      </div>
      <SidePanel />
    </main>
    <Footer />
  </div>
);

export default App;
